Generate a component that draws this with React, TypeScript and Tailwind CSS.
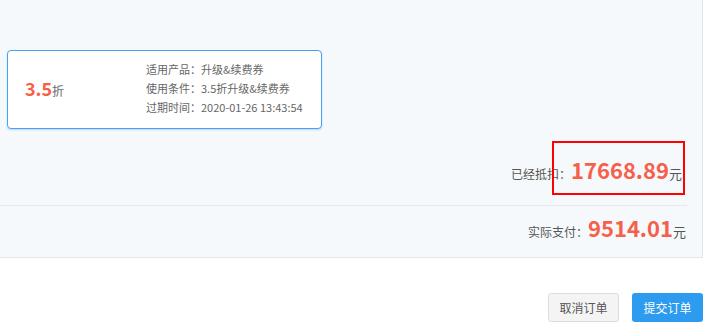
import React from "react";

const font = { fontFamily: '"Noto Sans CJK SC", "Noto Sans", sans-serif' };

export default function App() {
  return (
    <div
      className="w-[706px] h-[331px] bg-white overflow-hidden"
      style={font}
    >
      <div className="w-[703px] h-[258px] bg-[#f5f9fc] border-r border-b border-[#e3e6ea]">
        <div className="pt-[50px] pl-[7px]">
          <div className="w-[315px] h-[79px] bg-white border border-[#4aa0f2] rounded-[4px] shadow-[0_1px_2px_rgba(74,160,242,0.35)] flex items-center">
            <div className="w-[138px] pl-[17px] flex items-baseline mt-[-3px]">
              <span className="text-[18px] font-bold text-[#f6604a] leading-none">3.5</span>
              <span className="text-[12px] text-[#666] leading-none">折</span>
            </div>
            <div className="flex flex-col text-[11px] text-[#666] leading-[19px] mt-[-2px]">
              <span>适用产品：升级&amp;续费券</span>
              <span>使用条件：3.5折升级&amp;续费券</span>
              <span>过期时间：2020-01-26 13:43:54</span>
            </div>
          </div>
        </div>
        <div className="h-[76px] flex items-end justify-end pr-[20px] pb-[20px]">
          <div className="flex items-baseline">
            <span className="text-[12px] text-[#555]">已经抵扣：</span>
            <span className="relative flex items-baseline">
              <span className="absolute left-[-19px] right-[-3px] top-[-12px] bottom-[-10px] border-2 border-[#ff0000]" />
              <span className="text-[22px] font-bold text-[#f6604a] leading-[32px]">17668.89</span>
              <span className="text-[13px] text-[#555]">元</span>
            </span>
          </div>
        </div>
        <div className="w-[687px] h-px bg-[#e6e9ed]" />
        <div className="h-[52px] flex items-start justify-end pr-[16px] pt-[5px]">
          <div className="flex items-baseline">
            <span className="text-[12px] text-[#555]">实际支付：</span>
            <span className="text-[22px] font-bold text-[#f6604a] leading-[32px]">9514.01</span>
            <span className="text-[13px] text-[#555]">元</span>
          </div>
        </div>
      </div>
      <div className="flex justify-end gap-[13px] pr-[3px] pt-[35px]">
        <button className="w-[71px] h-[29px] rounded-[3px] bg-[#f4f4f4] border border-[#dcdcdc] text-[12px] text-[#555]">
          取消订单
        </button>
        <button className="w-[71px] h-[29px] rounded-[3px] bg-[#2d9cf0] text-[12px] text-white">
          提交订单
        </button>
      </div>
    </div>
  );
}
